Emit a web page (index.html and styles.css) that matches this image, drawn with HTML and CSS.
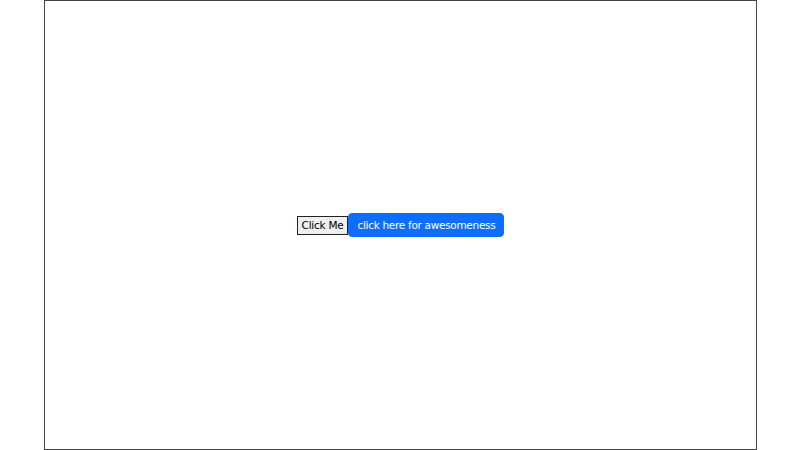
FILE: index.html
```html
<!DOCTYPE html>
<html>
<head>
<meta charset="utf-8">
<link rel="stylesheet" href="styles.css">
</head>
<body>
<div class="frame">
  <div class="row">
    <button class="plain">Click Me</button>
    <button class="primary">click here for awesomeness</button>
  </div>
</div>
</body>
</html>
```
FILE: styles.css
```css
html, body {
  margin: 0;
  padding: 0;
  background: #fff;
}
.frame {
  box-sizing: border-box;
  width: 713px;
  height: 450px;
  margin: 0 0 0 44px;
  border: 1px solid #444;
  display: flex;
  align-items: center;
  justify-content: center;
}
.row {
  display: flex;
  align-items: center;
}
.plain {
  font-family: "DejaVu Sans", sans-serif;
  font-size: 10.5px;
  letter-spacing: -0.25px;
  color: #000;
  background: #efefef;
  border: 1px solid #222;
  padding: 0 4px;
  height: 19px;
  margin: 0;
}
.primary {
  font-family: "DejaVu Sans", sans-serif;
  font-size: 10.5px;
  letter-spacing: -0.3px;
  color: #fff;
  background: #0d6efd;
  border: 1px solid #0d6efd;
  border-radius: 4px;
  padding: 0 8px;
  height: 24px;
  margin: 0;
}
```
